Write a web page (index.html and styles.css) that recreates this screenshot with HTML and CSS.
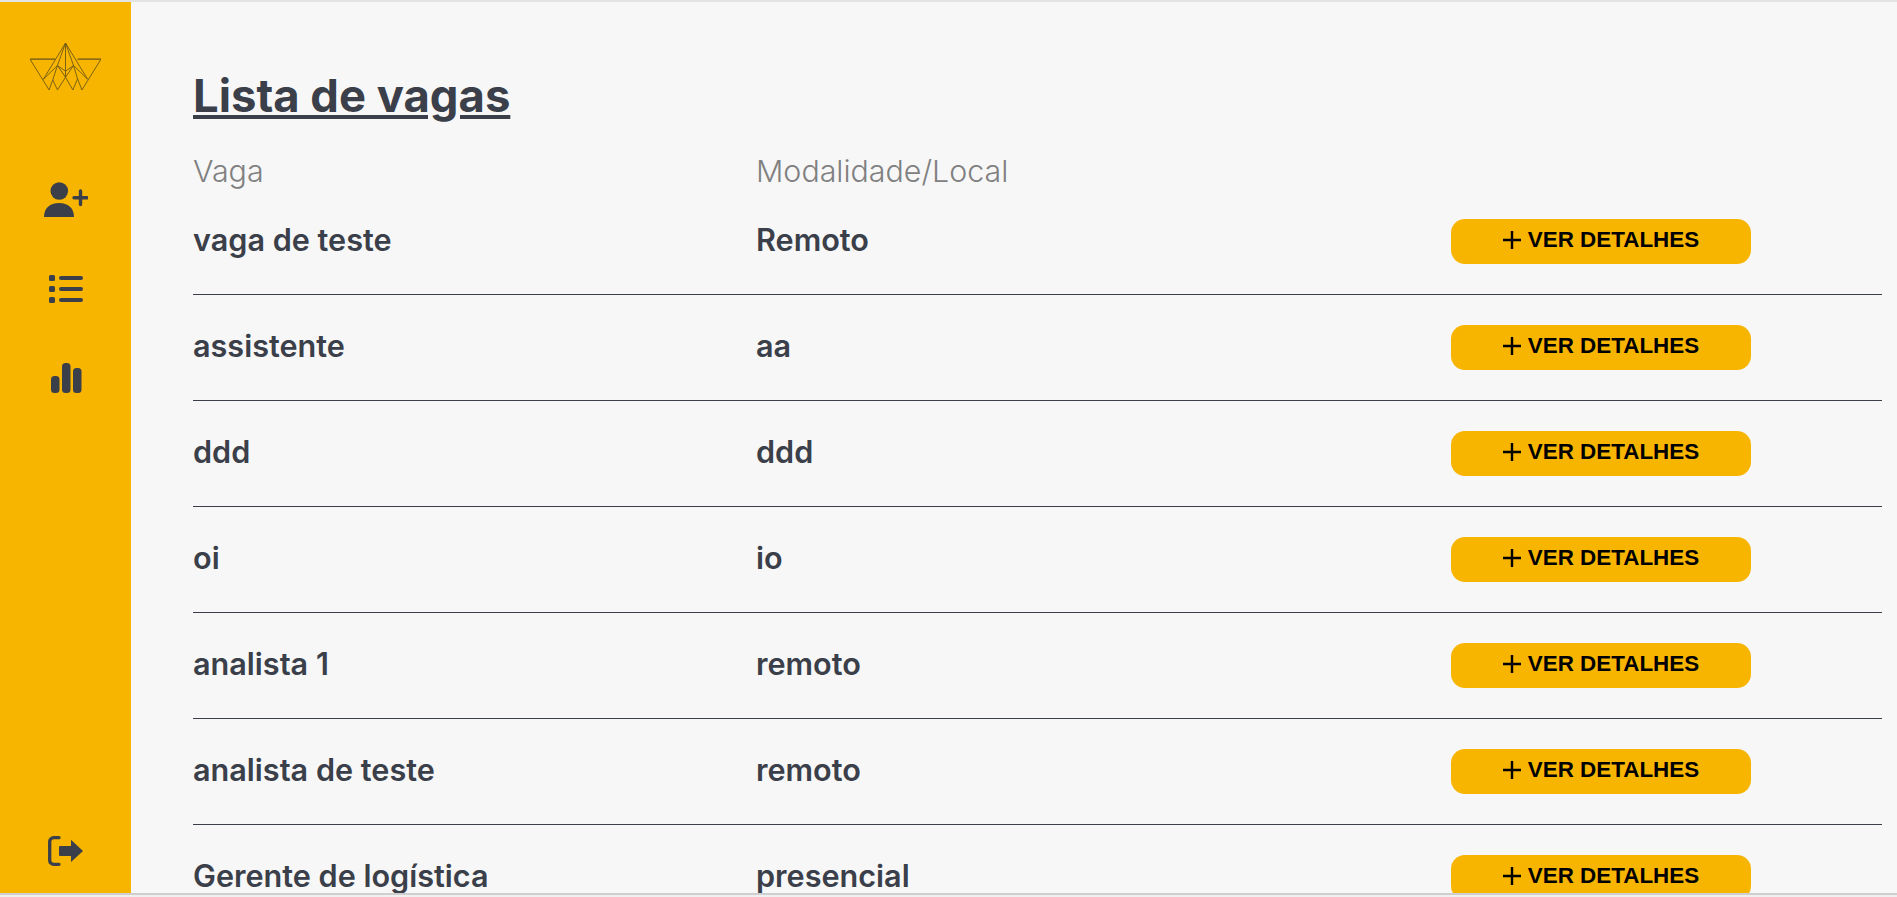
FILE: index.html
```html
<!DOCTYPE html>
<html lang="pt-BR">
<head>
    <meta charset="UTF-8">
    <meta name="viewport" content="width=device-width, initial-scale=1.0">
    <title>Lista de vagas</title>
    <link rel="stylesheet" href="styles.css">
</head>
<body>
    <div class="page">
        <aside class="sidebar">
            <svg class="logo" viewBox="90 128 212 140" fill="none" stroke="#6a5518" stroke-width="2.600" stroke-linejoin="round">
                <path d="M90 176H165M232 176H302" stroke-width="4"/>
                <path d="M90 176L147 268L158 238L172 268L196 230L218 268L232 235L245 268L302 176"/>
                <path d="M196 128L130 236L172 195L196 212L220 195L262 236L196 128"/>
                <path d="M196 128V230M196 128L172 195M196 128L220 195"/>
                <path d="M172 195L158 238M172 195L196 230L220 195L232 235"/>
            </svg>
            <nav class="nav">
                <a class="nav-item" href="#">
                    <svg width="44" height="35" viewBox="0 0 44 35" fill="#3a3f4a">
                        <circle cx="15.300" cy="9" r="8.800"/>
                        <path d="M0 35c0-9 6-14 15-14s15 5 15 14z"/>
                        <path d="M30 15.700h13M36.500 9v13.500" fill="none" stroke="#3a3f4a" stroke-width="3.400" stroke-linecap="round"/>
                    </svg>
                </a>
                <a class="nav-item" href="#">
                    <svg width="34" height="28" viewBox="0 0 34 28" fill="#3a3f4a">
                        <rect x="0" y="0" width="6" height="6" rx="1.500"/>
                        <rect x="0" y="11" width="6" height="6" rx="1.500"/>
                        <rect x="0" y="22" width="6" height="6" rx="1.500"/>
                        <rect x="10" y="1" width="24" height="4" rx="2"/>
                        <rect x="10" y="12" width="24" height="4" rx="2"/>
                        <rect x="10" y="23" width="24" height="4" rx="2"/>
                    </svg>
                </a>
                <a class="nav-item" href="#">
                    <svg width="32" height="30" viewBox="-1 0 32 30" fill="#3a3f4a">
                        <rect x="0" y="13" width="8.500" height="17" rx="3.500"/>
                        <rect x="11" y="0" width="8.500" height="30" rx="3.500"/>
                        <rect x="22" y="5" width="8.500" height="25" rx="3.500"/>
                    </svg>
                </a>
            </nav>
            <a class="logout" href="#">
                <svg width="35" height="30" viewBox="0 0 35 30" fill="#3a3f4a">
                    <path d="M11 1.700H6a4 4 0 0 0-4.300 4.300v18a4 4 0 0 0 4.300 4.300h5" fill="none" stroke="#3a3f4a" stroke-width="3.300" stroke-linecap="round"/>
                    <path d="M12 10h11V3.700L35 15 23 26v-6H12a1 1 0 0 1-1-1v-8a1 1 0 0 1 1-1z"/>
                </svg>
            </a>
        </aside>

        <main class="content">
            <h1 class="title">Lista de vagas</h1>
            <div class="list-head">
                <span>Vaga</span>
                <span>Modalidade/Local</span>
            </div>

            <div class="row">
                <span class="cell">vaga de teste</span>
                <span class="cell">Remoto</span>
                <button class="btn" type="button"><svg class="plus" viewBox="0 0 18 18"><path d="M9 0v18M0 9h18"/></svg>VER DETALHES</button>
            </div>
            <div class="row">
                <span class="cell">assistente</span>
                <span class="cell">aa</span>
                <button class="btn" type="button"><svg class="plus" viewBox="0 0 18 18"><path d="M9 0v18M0 9h18"/></svg>VER DETALHES</button>
            </div>
            <div class="row">
                <span class="cell">ddd</span>
                <span class="cell">ddd</span>
                <button class="btn" type="button"><svg class="plus" viewBox="0 0 18 18"><path d="M9 0v18M0 9h18"/></svg>VER DETALHES</button>
            </div>
            <div class="row">
                <span class="cell">oi</span>
                <span class="cell">io</span>
                <button class="btn" type="button"><svg class="plus" viewBox="0 0 18 18"><path d="M9 0v18M0 9h18"/></svg>VER DETALHES</button>
            </div>
            <div class="row">
                <span class="cell">analista 1</span>
                <span class="cell">remoto</span>
                <button class="btn" type="button"><svg class="plus" viewBox="0 0 18 18"><path d="M9 0v18M0 9h18"/></svg>VER DETALHES</button>
            </div>
            <div class="row">
                <span class="cell">analista de teste</span>
                <span class="cell">remoto</span>
                <button class="btn" type="button"><svg class="plus" viewBox="0 0 18 18"><path d="M9 0v18M0 9h18"/></svg>VER DETALHES</button>
            </div>
            <div class="row">
                <span class="cell">Gerente de logística</span>
                <span class="cell">presencial</span>
                <button class="btn" type="button"><svg class="plus" viewBox="0 0 18 18"><path d="M9 0v18M0 9h18"/></svg>VER DETALHES</button>
            </div>
        </main>
    </div>
    <div class="bottom-bar"></div>
</body>
</html>
```

FILE: styles.css
```css
/* Base */
html, body {
  margin: 0;
  height: 100%;
  overflow: hidden;
}

body {
  display: flex;
  flex-direction: column;
  background-color: #f7f7f7;
  border-top: 2px solid #e4e4e4;
  border-bottom: 2px solid #f0f0f0;
  box-sizing: border-box;
  font-family: Inter, "Liberation Sans", sans-serif;
  color: #3a3f4a;
}

.page {
  display: flex;
  flex: 1;
  min-height: 0;
}

.bottom-bar {
  height: 2px;
  background-color: #cfcfcf;
}

/* Sidebar */
.sidebar {
  width: 131px;
  flex-shrink: 0;
  display: flex;
  flex-direction: column;
  align-items: center;
  background-color: #f7b500;
}

.logo {
  width: 71px;
  height: 47px;
  margin-top: 41px;
}

.nav {
  display: flex;
  flex-direction: column;
  align-items: center;
  margin-top: 65px;
}

.nav-item {
  height: 89px;
  display: flex;
  align-items: center;
}

.logout {
  margin-top: auto;
  margin-bottom: 27px;
  line-height: 0;
}

/* Contenu */
.content {
  flex: 1;
  min-width: 0;
  padding: 0 15px 0 62px;
  overflow: hidden;
}

.title {
  margin: 66px 0 0;
  font-size: 45.400px;
  line-height: 56px;
  font-weight: 700;
  text-decoration: underline;
}

.list-head,
.row {
  display: grid;
  grid-template-columns: 563px 695px 300px;
  align-items: center;
}

.list-head {
  margin-top: 29px;
  font-size: 30.400px;
  font-weight: 300;
  line-height: 36px;
  color: #808080;
}

.row {
  height: 105px;
  font-size: 30.600px;
  font-weight: 600;
  line-height: 1;
  border-bottom: 1px solid #3a3f4a;
}

.row:first-of-type {
  height: 87px;
}

.cell {
  padding-bottom: 2px;
}

.btn {
  height: 45px;
  display: flex;
  align-items: center;
  justify-content: center;
  gap: 7px;
  padding: 0 0 3px;
  border: 0;
  border-radius: 14px;
  background-color: #f7b500;
  color: #000;
  font-family: "Liberation Sans", Arial, sans-serif;
  font-size: 22.400px;
  font-weight: 700;
}

.plus {
  width: 18px;
  height: 18px;
  fill: none;
  stroke: #000;
  stroke-width: 2.400;
}
```
